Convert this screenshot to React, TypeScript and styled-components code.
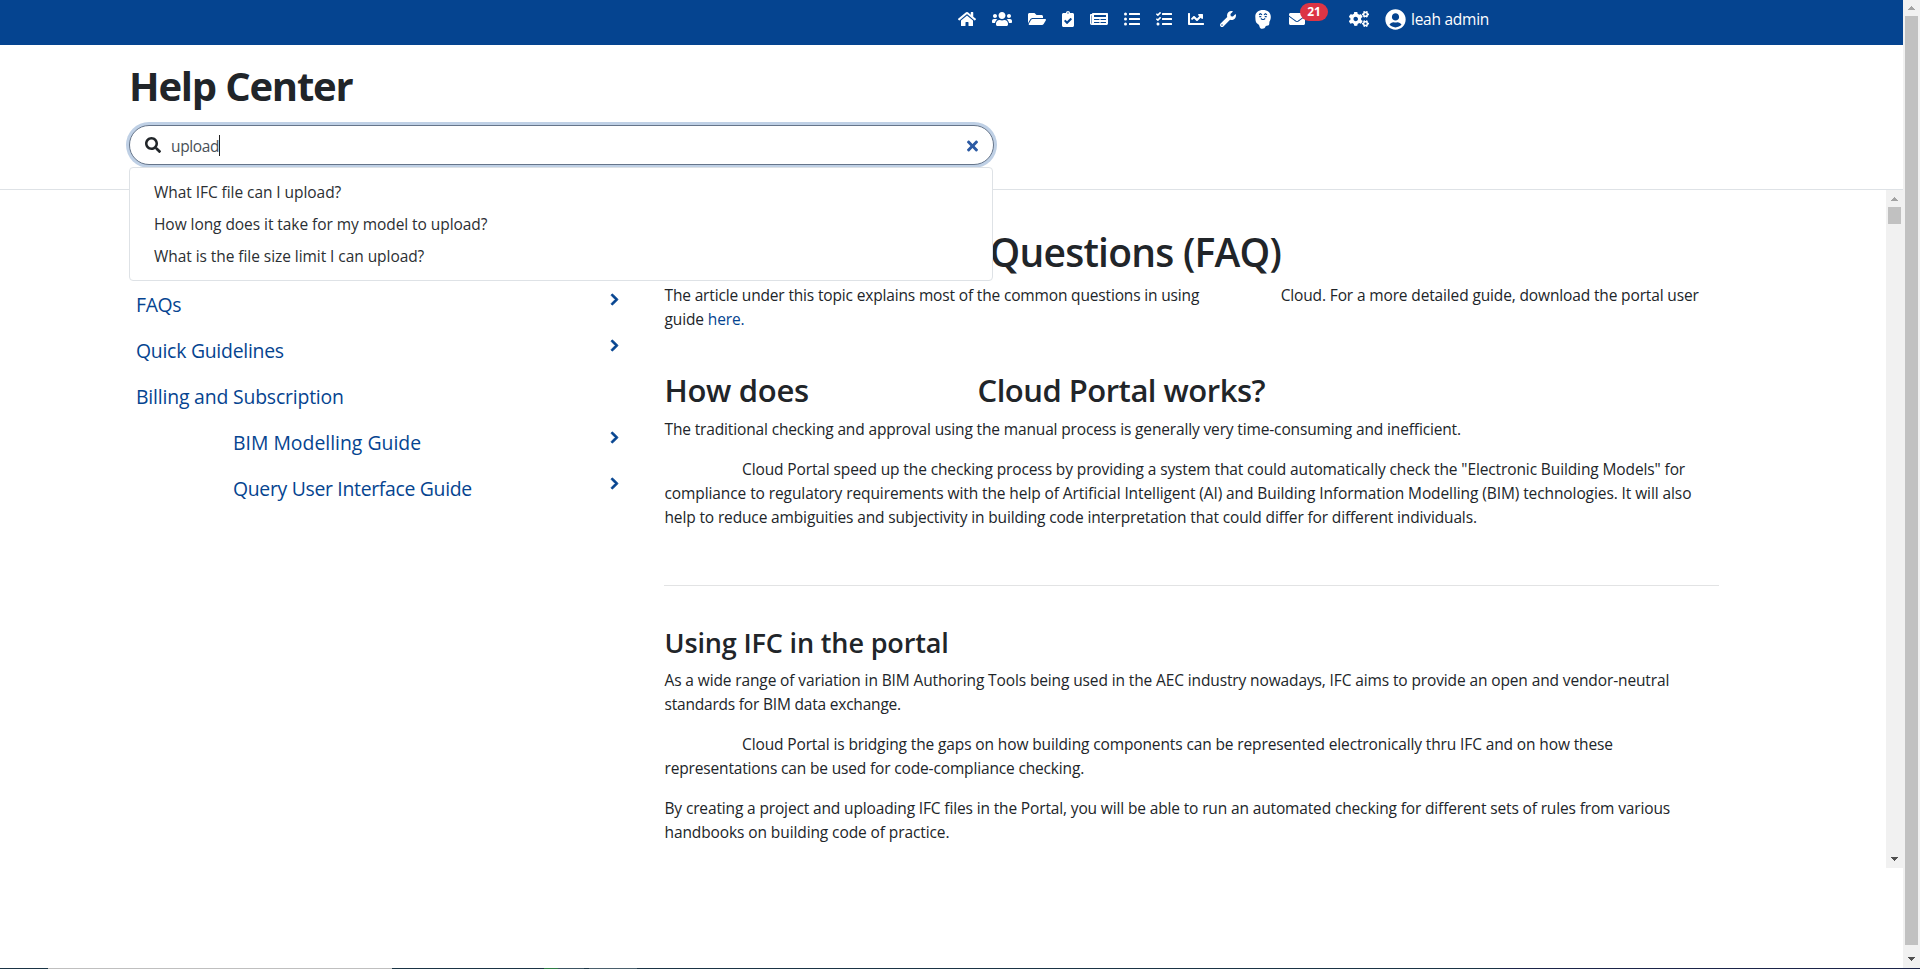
import React from 'react';
import styled, { createGlobalStyle } from 'styled-components';
import {
  FaHome, FaUsers, FaFolderOpen, FaClipboardCheck, FaNewspaper, FaListUl, FaTasks,
  FaChartLine, FaWrench, FaEnvelope, FaCogs, FaUserCircle, FaSearch, FaTimes, FaChevronRight,
} from 'react-icons/fa';

const BLUE = '#054490';
const INK = '#212529';
const LINE = '#dee2e6';

const GlobalStyle = createGlobalStyle`
  *, *::before, *::after { box-sizing: border-box; }
  body {
    margin: 0;
    overflow: hidden;
    background: #fff;
    color: ${INK};
    font: 400 15.5px/24px "Open Sans", "Noto Sans", sans-serif;
  }
  h1, h2, h3, p, ul { margin: 0; padding: 0; }
  a { color: ${BLUE}; text-decoration: none; }
`;

const Screen = styled.div`
  display: flex;
  flex-direction: column;
  height: 969px;
`;

const Viewport = styled.div`
  display: flex;
  flex: 1;
  min-height: 0;
`;

const Page = styled.div`
  display: flex;
  flex-direction: column;
  flex: 1;
  min-width: 0;
`;

/* Navigation bar */

const NavBar = styled.nav`
  display: flex;
  align-items: center;
  height: 45px;
  padding: 0 0 7px 958px;
  background: ${BLUE};
  color: #fff;
`;

const NavItem = styled.a<{ $w: number; $h?: number; $gap?: number }>`
  display: flex;
  align-items: center;
  position: relative;
  width: ${p => p.$w}px;
  margin-right: ${p => p.$gap ?? 16}px;
  color: #fff;

  svg {
    width: ${p => p.$w}px;
    height: ${p => p.$h ?? 16}px;
  }
`;

const Badge = styled.span`
  position: absolute;
  left: 11px;
  top: -8px;
  width: 28px;
  height: 18px;
  border-radius: 9px;
  background: #dc3545;
  font-size: 12px;
  font-weight: 700;
  line-height: 18px;
  text-align: center;
`;

const UserName = styled.span`
  margin-left: -11px;
  letter-spacing: -0.25px;
`;

/* Header with search */

const Header = styled.header`
  height: 145px;
  padding: 17px 0 0 129px;
  border-bottom: 1px solid ${LINE};
`;

const PageTitle = styled.h1`
  margin-bottom: 15px;
  font-size: 40px;
  font-weight: 700;
  line-height: 48px;
  letter-spacing: -1.2px;
`;

const SearchArea = styled.div`
  position: relative;
  width: 865px;
`;

const SearchBox = styled.div`
  display: flex;
  align-items: center;
  height: 40px;
  padding: 0 15px;
  border: 1px solid #66758a;
  border-radius: 20px;
  background: #fff;
  box-shadow: 0 0 0 3px #bfd0e5;
`;

const SearchValue = styled.span`
  flex: 1;
  margin: 1px 0 0 10px;
  color: #495057;
  letter-spacing: -0.35px;
`;

const Caret = styled.span`
  display: inline-block;
  width: 1px;
  height: 21px;
  background: #222;
  vertical-align: -4px;
`;

const ClearIcon = styled(FaTimes)`
  width: 11px;
  height: 16px;
  margin: 2px 0 0;
  color: #2c5aa3;
`;

const Suggestions = styled.ul`
  position: absolute;
  z-index: 2;
  top: 42px;
  left: 0;
  width: 864px;
  padding: 8px 0;
  border: 1px solid ${LINE};
  border-radius: 4px;
  background: #fff;
  list-style: none;
`;

const Suggestion = styled.li`
  padding: 4px 24px;
  letter-spacing: -0.06px;
  color: #2b2f33;
`;

/* Body */

const Body = styled.main`
  display: flex;
  height: 678px;
`;

const Sidebar = styled.aside`
  width: 506px;
  margin-left: 129px;
  padding-top: 91px;
`;

const TopicRow = styled.a`
  display: flex;
  justify-content: space-between;
  height: 46px;
  padding: 9px 16px 7px 7px;
  font-size: 19.4px;
  line-height: 30px;
`;

const TopicLabel = styled.span<{ $track: number; $indent?: boolean }>`
  margin-left: ${p => (p.$indent ? 97 : 0)}px;
  letter-spacing: ${p => p.$track}px;
`;

const Chevron = styled(FaChevronRight)`
  width: 9px;
  height: 13px;
  margin-top: 3px;
  stroke: currentColor;
  stroke-width: 36px;
`;

const Article = styled.article`
  flex: 1;
  padding: 37px 0 0 29.5px;
  overflow: hidden;
`;

const Section = styled.section<{ $top?: number }>`
  margin-top: ${p => p.$top ?? 0}px;
`;

const Heading = styled.h2<{ $size: number; $line: number; $drop?: number }>`
  display: flex;
  margin-bottom: ${p => 8 - (p.$drop ?? 0)}px;
  padding-top: ${p => p.$drop ?? 0}px;
  font-size: ${p => p.$size}px;
  font-weight: 600;
  line-height: ${p => p.$line}px;
  white-space: nowrap;
`;

const Paragraph = styled.p`
  & + & { margin-top: 16px; }
`;

const TextLine = styled.span`
  display: flex;
  white-space: pre;
`;

const Run = styled.span<{ $track: number; $lead?: number; $w?: number }>`
  width: ${p => (p.$w ? `${p.$w}px` : 'auto')};
  margin-left: ${p => p.$lead ?? 0}px;
  letter-spacing: ${p => p.$track}px;
`;

const Rule = styled.hr`
  width: 1055px;
  height: 1px;
  margin: 56px 0 0 -0.5px;
  border: 0;
  background: #e2e3e4;
`;

/* Scroll bars */

const Track = styled.div`
  display: flex;
  flex-direction: column;
  align-items: center;
  width: 17px;
  background: #f1f1f1;
`;

const Thumb = styled.div<{ $h: number }>`
  width: 13px;
  height: ${p => p.$h}px;
  background: #c1c1c1;
`;

const ArrowCell = styled.div<{ $end?: boolean; $h: number }>`
  display: flex;
  align-items: center;
  justify-content: center;
  height: ${p => p.$h}px;
  margin-top: ${p => (p.$end ? 'auto' : 0)};
  color: ${p => (p.$end ? '#505050' : '#a3a3a3')};
`;

const BottomEdge = styled.div`
  height: 1px;
  background: linear-gradient(
    to right,
    #1b3445 0 48px, #bfbfbf 48px 392px, #1b3445 392px 544px, #2f7d46 544px 558px,
    #3c5362 558px 584px, #1b3445 584px 589px, #4b606d 589px 637px, #1b3445 637px 1500px,
    #1b2449 1500px 100%
  );
`;

function HeadIcon() {
  return (
    <svg viewBox="0 0 16 19" fill="none">
      <path
        fill="#fff"
        d="M8 0C3.500 0 .3 2.600.3 6.400L.5 10c.2 2 1 3 2.300 4 1.100.8 1.500 1.300 1.700 2.500.3 1.500 1.300 2.300 2.700 2.300 1.900 0 2.800-.8 3.300-2.200.2-.6.600-.8 1.400-.9 1.700-.2 2.300-.8 2.400-2.300l.1-1.600c.9-1.300 1.400-2.900 1.400-5C15.800 2.600 12.500 0 8 0z"
      />
      <path
        stroke={BLUE}
        strokeWidth="1.200"
        d="M4 4.600l1.600-.8L7 4.900M9 4.900l1.400-1.100 1.600.9M4.300 6.700h2M9.700 6.700h2M5.800 8.500l1.400 1h1.600l1.400-1"
      />
    </svg>
  );
}

function Arrow({ up }: { up?: boolean }) {
  return (
    <svg width="7" height="4" viewBox="0 0 7 4" shapeRendering="crispEdges">
      <path fill="currentColor" d={up ? 'M3 0h1v1h1v1h1v1h1v1H0V3h1V2h1V1h1z' : 'M0 0h7v1H6v1H5v1H4v1H3V3H2V2H1V1H0z'} />
    </svg>
  );
}

function ScrollBar({ thumb, lead = 16 }: { thumb: number; lead?: number }) {
  return (
    <Track>
      <ArrowCell $h={lead}><Arrow up /></ArrowCell>
      <Thumb $h={thumb} />
      <ArrowCell $h={18} $end><Arrow /></ArrowCell>
    </Track>
  );
}

const suggestions = [
  'What IFC file can I upload?',
  'How long does it take for my model to upload?',
  'What is the file size limit I can upload?',
];

const topics = [
  { label: 'FAQs', track: -0.35, open: true },
  { label: 'Quick Guidelines', track: -0.25, open: true },
  { label: 'Billing and Subscription', track: -0.18, open: false },
  { label: 'BIM Modelling Guide', track: 0, open: true, indent: true },
  { label: 'Query User Interface Guide', track: -0.31, open: true, indent: true },
];

export default function App() {
  return (
    <Screen>
      <GlobalStyle />
      <Viewport>
        <Page>
          <NavBar>
            <NavItem $w={18}><FaHome /></NavItem>
            <NavItem $w={20}><FaUsers /></NavItem>
            <NavItem $w={18}><FaFolderOpen /></NavItem>
            <NavItem $w={12}><FaClipboardCheck /></NavItem>
            <NavItem $w={18}><FaNewspaper /></NavItem>
            <NavItem $w={16}><FaListUl /></NavItem>
            <NavItem $w={16}><FaTasks /></NavItem>
            <NavItem $w={16}><FaChartLine /></NavItem>
            <NavItem $w={16} $gap={19}><FaWrench /></NavItem>
            <NavItem $w={16} $h={19} $gap={18}><HeadIcon /></NavItem>
            <NavItem $w={16} $gap={44}>
              <FaEnvelope />
              <Badge>21</Badge>
            </NavItem>
            <NavItem $w={20}><FaCogs /></NavItem>
            <NavItem $w={21} $h={21}><FaUserCircle /></NavItem>
            <UserName>leah admin</UserName>
          </NavBar>

          <Header>
            <PageTitle>Help Center</PageTitle>
            <SearchArea>
              <SearchBox>
                <FaSearch size={16} />
                <SearchValue>upload<Caret /></SearchValue>
                <ClearIcon />
              </SearchBox>
              <Suggestions>
                {suggestions.map(s => <Suggestion key={s}>{s}</Suggestion>)}
              </Suggestions>
            </SearchArea>
          </Header>

          <Body>
            <Sidebar>
              {topics.map(t => (
                <TopicRow key={t.label}>
                  <TopicLabel $track={t.track} $indent={t.indent}>{t.label}</TopicLabel>
                  {t.open && <Chevron />}
                </TopicRow>
              ))}
            </Sidebar>

            <Article>
              <Section>
                <Heading as="h1" $size={39} $line={48} $drop={1}>
                  <Run $track={-0.8} $w={325}>Frequently Asked</Run>
                  <Run $track={-0.75}>Questions (FAQ)</Run>
                </Heading>
                <Paragraph>
                  <TextLine>
                    <Run $track={-0.16}>The article under this topic explains most of the common questions in using</Run>
                    <Run $track={-0.14} $lead={81.5}>Cloud. For a more detailed guide, download the portal user</Run>
                  </TextLine>
                  <TextLine>
                    <Run $track={-0.12}>guide <a>here.</a></Run>
                  </TextLine>
                </Paragraph>
              </Section>

              <Section $top={40}>
                <Heading $size={31} $line={38.4}>
                  <Run $track={-0.3} $w={313}>How does</Run>
                  <Run $track={-0.5}>Cloud Portal works?</Run>
                </Heading>
                <Paragraph>
                  <TextLine>
                    <Run $track={-0.145}>The traditional checking and approval using the manual process is generally very time-consuming and inefficient.</Run>
                  </TextLine>
                </Paragraph>
                <Paragraph>
                  <TextLine>
                    <Run $track={-0.115} $lead={77.5}>Cloud Portal speed up the checking process by providing a system that could automatically check the "Electronic Building Models" for</Run>
                  </TextLine>
                  <TextLine>
                    <Run $track={-0.093}>compliance to regulatory requirements with the help of Artificial Intelligent (AI) and Building Information Modelling (BIM) technologies. It will also</Run>
                  </TextLine>
                  <TextLine>
                    <Run $track={-0.14}>help to reduce ambiguities and subjectivity in building code interpretation that could differ for different individuals.</Run>
                  </TextLine>
                </Paragraph>
              </Section>

              <Rule />

              <Section $top={40}>
                <Heading as="h3" $size={27} $line={33.6}>
                  <Run $track={-0.15}>Using IFC in the portal</Run>
                </Heading>
                <Paragraph>
                  <TextLine>
                    <Run $track={-0.123}>As a wide range of variation in BIM Authoring Tools being used in the AEC industry nowadays, IFC aims to provide an open and vendor-neutral</Run>
                  </TextLine>
                  <TextLine>
                    <Run $track={-0.2}>standards for BIM data exchange.</Run>
                  </TextLine>
                </Paragraph>
                <Paragraph>
                  <TextLine>
                    <Run $track={-0.125} $lead={77.5}>Cloud Portal is bridging the gaps on how building components can be represented electronically thru IFC and on how these</Run>
                  </TextLine>
                  <TextLine>
                    <Run $track={-0.155}>representations can be used for code-compliance checking.</Run>
                  </TextLine>
                </Paragraph>
                <Paragraph>
                  <TextLine>
                    <Run $track={-0.143}>By creating a project and uploading IFC files in the Portal, you will be able to run an automated checking for different sets of rules from various</Run>
                  </TextLine>
                  <TextLine>
                    <Run $track={-0.1}>handbooks on building code of practice.</Run>
                  </TextLine>
                </Paragraph>
              </Section>
            </Article>
            <ScrollBar thumb={17} lead={17} />
          </Body>
        </Page>
        <ScrollBar thumb={929} />
      </Viewport>
      <BottomEdge />
    </Screen>
  );
}
